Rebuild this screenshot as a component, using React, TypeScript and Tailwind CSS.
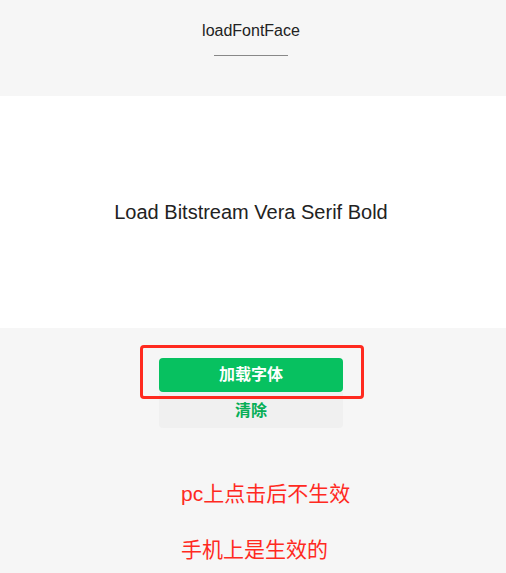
import React from 'react';

const App = () => {
  return (
    <div className="min-h-[573px] w-full bg-[#f6f6f6] font-['Liberation_Sans','Noto_Sans_CJK_SC',sans-serif] relative">
      {/* Header */}
      <div className="h-[96px] flex flex-col items-center pt-[21px] pr-[4px]">
        <div className="text-[16px] leading-[20px] text-[#222]">loadFontFace</div>
        <div className="mt-[14px] w-[74px] h-px bg-[#888]"></div>
      </div>

      {/* Preview */}
      <div className="h-[232px] bg-white flex items-center justify-center pr-[4px]">
        <p className="text-[20px] text-[#222]">Load Bitstream Vera Serif Bold</p>
      </div>

      {/* Buttons */}
      <div className="flex flex-col items-center pt-[30px] pr-[4px]">
        <button className="w-[184px] h-[34px] rounded-[4px] bg-[#07c160] text-white font-bold text-[16px]">
          加载字体
        </button>
        <button className="w-[184px] h-[36px] rounded-b-[4px] bg-[#f0f0f0] text-[#06ae56] font-bold text-[16px] leading-[36px] pt-[1px]">
          清除
        </button>
      </div>

      {/* Annotation box */}
      <div className="absolute left-[140px] top-[345px] w-[224px] h-[54px] border-[3px] border-[#ff2a1f] rounded-[4px]"></div>

      {/* Notes */}
      <div className="pl-[181px] pt-[51px] text-[#ff2a1f] text-[21px]">
        <p className="leading-[30px]">pc上点击后不生效</p>
        <p className="leading-[30px] mt-[26px]">手机上是生效的</p>
      </div>
    </div>
  );
};

export default App;
